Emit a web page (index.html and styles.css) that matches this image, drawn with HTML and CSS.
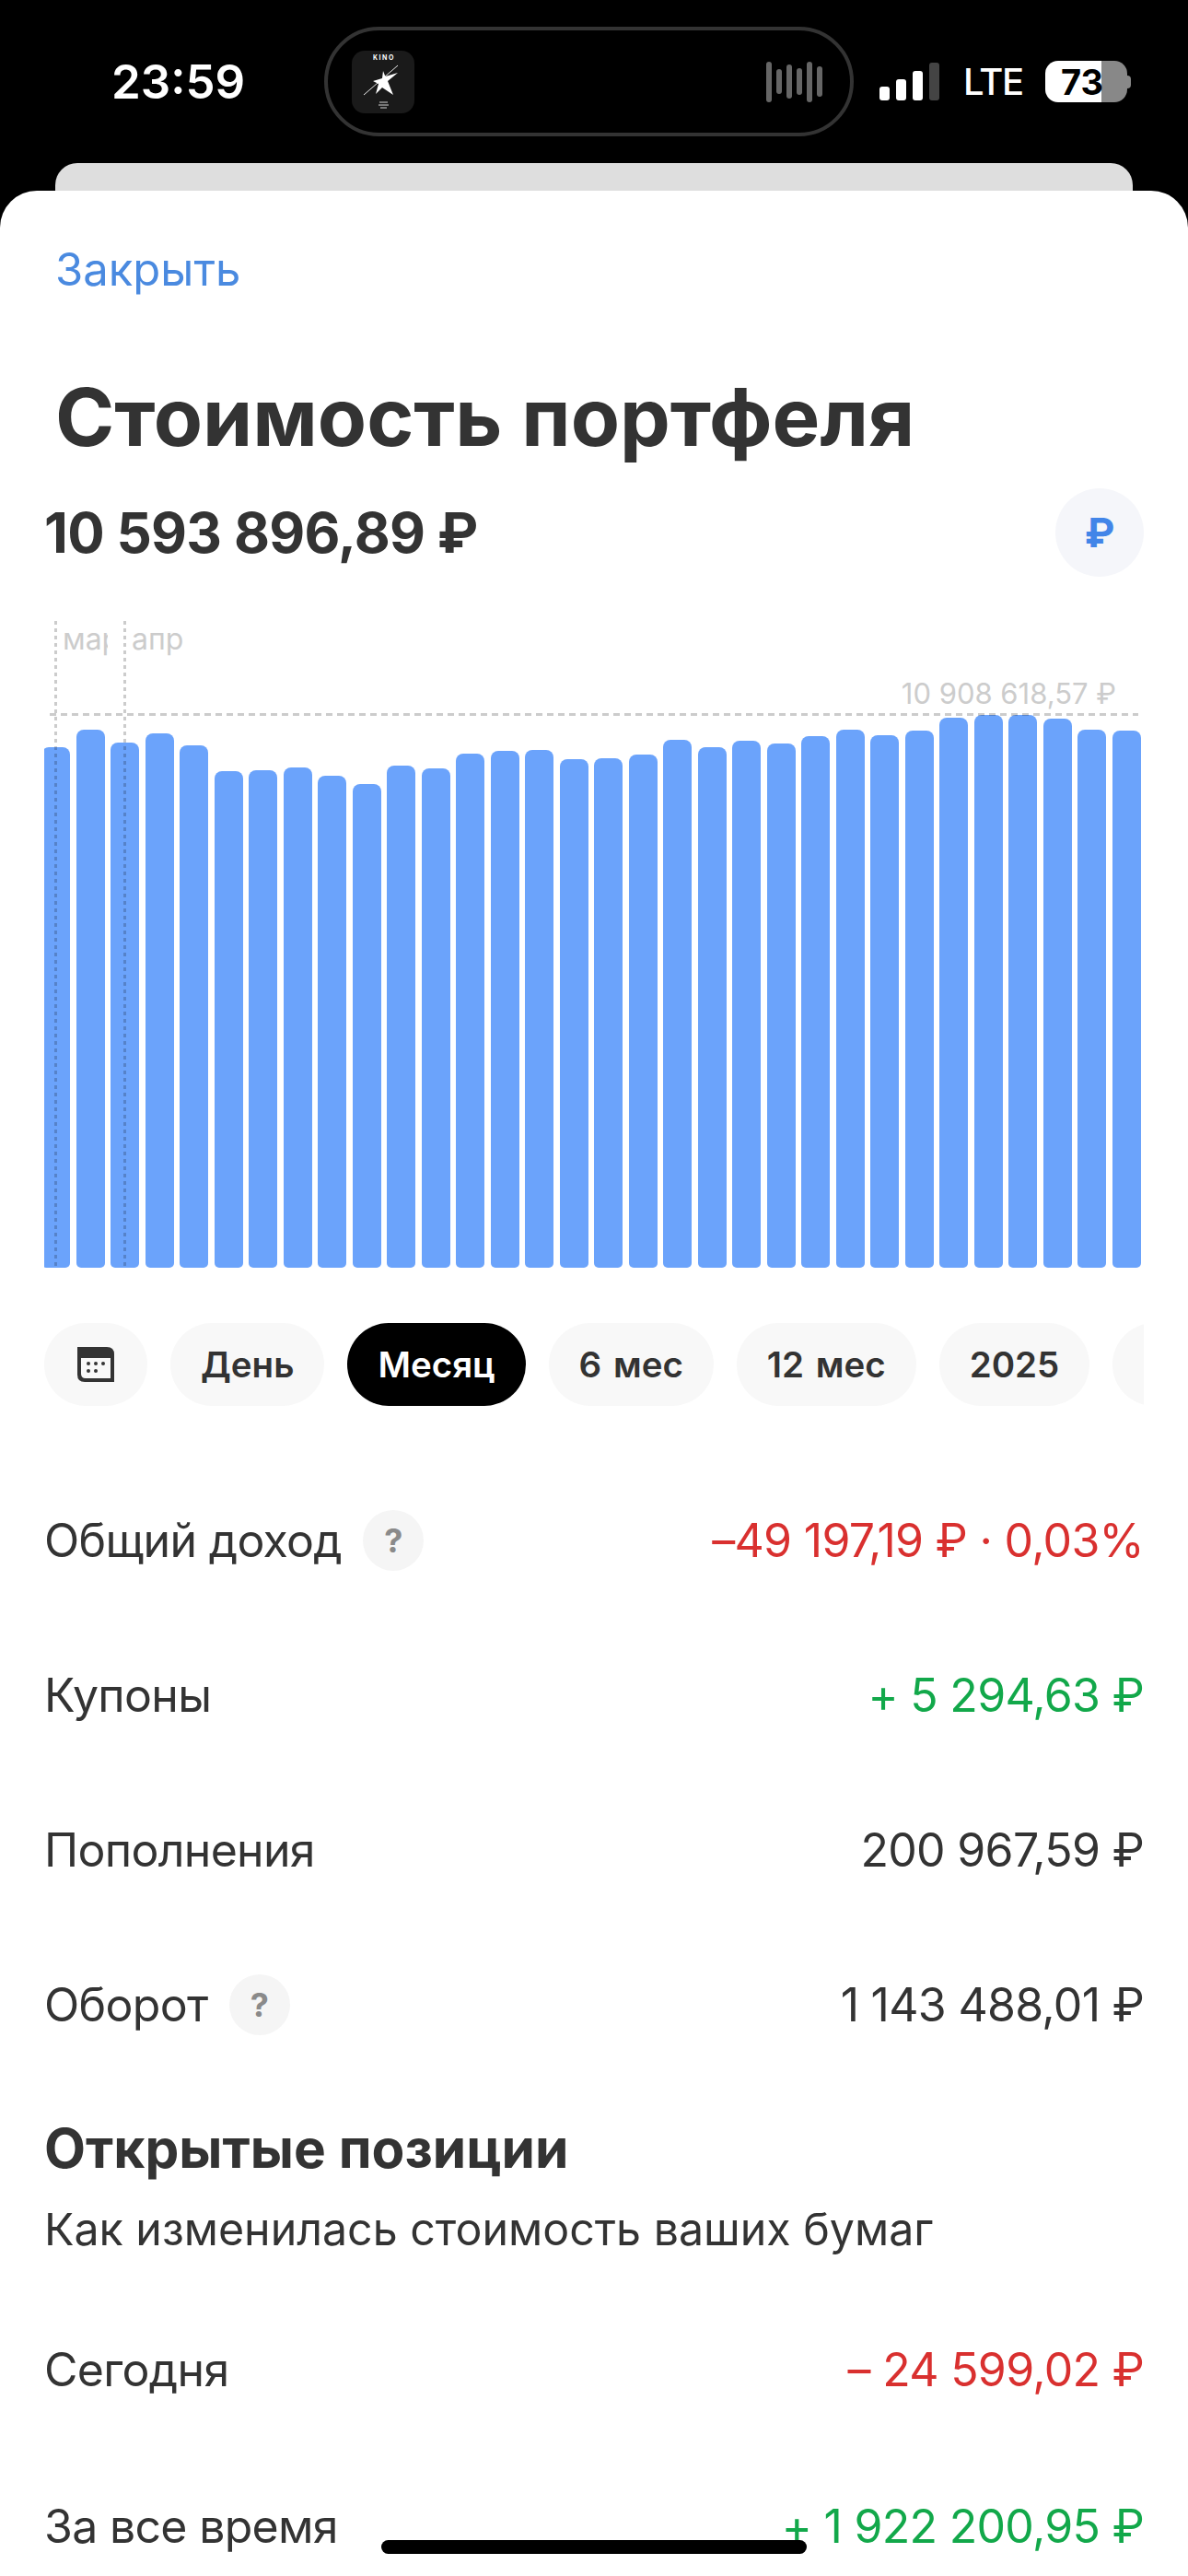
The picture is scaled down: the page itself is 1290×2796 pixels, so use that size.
FILE: index.html
```html
<!DOCTYPE html>
<html>
<head>
    <title>Стоимость портфеля</title>
    <link rel="stylesheet" href="styles.css">
</head>
<body>
    <div class="status">
        <div class="time">23:59</div>
        <div class="island">
            <svg class="album" width="68" height="68" viewBox="0 0 68 68">
                <rect width="68" height="68" rx="14" fill="#1a1a1a"/>
                <text x="35" y="10" class="album-title">KINO</text>
                <line x1="13" y1="48" x2="50" y2="16" stroke="#e8e8e8" stroke-width="1"/>
                <polygon points="34,22 36.4,28 50,24 39,33 45,48 33,40 26,47 29,36 23,33 33,30" fill="#fff"/>
                <path d="M30 55h9v2h-9zM29 58h11v2h-11zM31 61h7v2h-7z" fill="#777"/>
            </svg>
            <div class="wave">
                <span class="w1"></span><span class="w2"></span><span class="w3"></span><span class="w4"></span><span class="w1"></span><span class="w5"></span>
            </div>
        </div>
        <div class="signal">
            <span class="s1"></span><span class="s2"></span><span class="s3"></span><span class="s4"></span>
        </div>
        <div class="lte">LTE</div>
        <div class="battery"><span class="battery-num">73</span></div>
        <div class="battery-nub"></div>
    </div>
    <div class="back-sheet"></div>
    <div class="sheet">
        <div class="close">Закрыть</div>
        <h1 class="title">Стоимость портфеля</h1>
        <div class="total">
            <div class="total-sum">10 593 896,89 ₽</div>
            <div class="currency">₽</div>
        </div>
        <div class="chart">
            <div class="bars" id="bars"></div>
            <div class="vline vline-mar"></div>
            <div class="vline vline-apr"></div>
            <div class="hline"></div>
            <div class="month month-mar">мар</div>
            <div class="month month-apr">апр</div>
            <div class="max">10 908 618,57 ₽</div>
        </div>
        <div class="pills">
            <div class="pill pill-cal">
                <svg width="40" height="38" viewBox="0 0 40 38">
                    <path d="M0 0H32Q40 0 40 8V38H8Q0 38 0 30Z" fill="#333"/>
                    <path d="M4 12H36V34H9Q4 34 4 29Z" fill="#f8f8f8"/>
                    <circle cx="12" cy="18" r="2" fill="#333"/><circle cx="20" cy="18" r="2" fill="#333"/><circle cx="28" cy="18" r="2" fill="#333"/>
                    <circle cx="12" cy="26" r="2" fill="#333"/><circle cx="20" cy="26" r="2" fill="#333"/>
                </svg>
            </div>
            <div class="pill">День</div>
            <div class="pill pill-active">Месяц</div>
            <div class="pill pill-months">6 мес</div>
            <div class="pill pill-months">12 мес</div>
            <div class="pill">2025</div>
            <div class="pill pill-more"></div>
        </div>
        <div class="rows">
            <div class="row">
                <div class="row-label">Общий доход <span class="help">?</span></div>
                <div class="red">–49 197,19 ₽ · 0,03%</div>
            </div>
            <div class="row">
                <div class="row-label">Купоны</div>
                <div class="green">+ 5 294,63 ₽</div>
            </div>
            <div class="row">
                <div class="row-label">Пополнения</div>
                <div>200 967,59 ₽</div>
            </div>
            <div class="row">
                <div class="row-label">Оборот <span class="help">?</span></div>
                <div>1 143 488,01 ₽</div>
            </div>
        </div>
        <h2 class="section">Открытые позиции</h2>
        <div class="section-sub">Как изменилась стоимость ваших бумаг</div>
        <div class="rows rows-open">
            <div class="row">
                <div class="row-label">Сегодня</div>
                <div class="red">– 24 599,02 ₽</div>
            </div>
            <div class="row">
                <div class="row-label">За все время</div>
                <div class="green">+ 1 922 200,95 ₽</div>
            </div>
        </div>
    </div>
    <div class="home-bar"></div>
    <script>
        const tops = [812, 793, 807, 797, 810, 838, 837, 834, 843, 852, 832, 835, 819, 816, 815, 825,
            824, 820, 804, 812, 805, 808, 800, 793, 799, 794, 780, 777, 777, 781, 793, 794];
        const bars = document.getElementById("bars");
        for (const top of tops) {
            const bar = document.createElement("div");
            bar.className = "bar";
            bar.style.height = (1377 - top) + "px";
            bars.appendChild(bar);
        }
    </script>
</body>
</html>
```

FILE: styles.css
```css
* {
    box-sizing: border-box;
}

body {
    margin: 0;
    width: 1290px;
    height: 2796px;
    overflow: hidden;
    background: #000;
    font-family: Inter, "Noto Sans", sans-serif;
    color: #333;
}

.status {
    display: flex;
    align-items: center;
    height: 177px;
    color: #fff;
}

.time {
    width: 144px;
    margin-left: 121px;
    font-size: 51px;
    font-weight: 600;
    white-space: nowrap;
}

.island {
    display: flex;
    align-items: center;
    justify-content: space-between;
    width: 575px;
    height: 119px;
    margin-left: 87px;
    padding: 0 30px 0 26px;
    border: 4px solid #333;
    border-radius: 60px;
}

.album-title {
    font-size: 7px;
    font-weight: 700;
    letter-spacing: 1.6px;
    text-anchor: middle;
    fill: #fff;
}

.wave {
    display: flex;
    align-items: center;
    gap: 5px;
}

.wave span {
    width: 6px;
    border-radius: 3px;
    background: #666;
}

.w1 { height: 44px; }
.w2 { height: 27px; }
.w3 { height: 37px; }
.w4 { height: 29px; }
.w5 { height: 33px; }

.signal {
    display: flex;
    align-items: flex-end;
    gap: 7px;
    height: 41px;
    margin-left: 28px;
}

.signal span {
    width: 11px;
    border-radius: 3px;
    background: #fff;
}

.s1 { height: 15px; }
.s2 { height: 23px; }
.s3 { height: 32px; }
.signal .s4 { height: 41px; background: #444; }

.lte {
    width: 62px;
    margin-left: 26px;
    font-size: 40px;
    font-weight: 500;
    letter-spacing: -1.5px;
}

.battery {
    display: flex;
    align-items: center;
    width: 89px;
    height: 45px;
    margin-left: 27px;
    padding-left: 17px;
    border-radius: 14px;
    background: linear-gradient(90deg, #fff 69%, #888 69%);
}

.battery-num {
    color: #000;
    font-size: 38px;
    font-weight: 700;
}

.battery-nub {
    width: 4px;
    height: 14px;
    border-radius: 0 4px 4px 0;
    background: #888;
}

.back-sheet {
    height: 30px;
    margin: 0 60px;
    border-radius: 24px 24px 0 0;
    background: #dedede;
}

.sheet {
    height: 2589px;
    padding: 57px 48px 0;
    border-radius: 40px 40px 0 0;
    background: #fff;
}

.close {
    margin-left: 12px;
    color: #4a8ae0;
    font-size: 49px;
    line-height: 58px;
}

.title {
    margin: 81px 0 0 12px;
    font-size: 87px;
    font-weight: 700;
    line-height: 100px;
}

.total {
    display: flex;
    align-items: center;
    justify-content: space-between;
    margin-top: 27px;
}

.total-sum {
    font-size: 60px;
    font-weight: 700;
    letter-spacing: -0.7px;
}

.currency {
    display: flex;
    align-items: center;
    justify-content: center;
    width: 96px;
    height: 96px;
    border-radius: 50%;
    background: #f5f6fa;
    color: #4285e8;
    font-size: 44px;
    font-weight: 700;
}

.chart {
    position: relative;
    height: 702px;
    margin-top: 48px;
    overflow: hidden;
}

.bars {
    display: flex;
    align-items: flex-end;
    gap: 6.71px;
    height: 100%;
    margin-left: -2.8px;
}

.bar {
    flex: none;
    width: 30.8px;
    border-radius: 8px 8px 5px 5px;
    background: #6ba3fb;
}

.vline {
    position: absolute;
    top: 0;
    bottom: 0;
    width: 3px;
    background: repeating-linear-gradient(180deg, rgba(0, 0, 0, 0.2) 0 4.5px, transparent 4.5px 8px);
}

.vline-mar { left: 11px; }
.vline-apr { left: 86px; }

.hline {
    position: absolute;
    top: 100px;
    left: 6px;
    width: 1182px;
    height: 3px;
    background: repeating-linear-gradient(90deg, rgba(0, 0, 0, 0.2) 0 7px, transparent 7px 12px);
}

.month {
    position: absolute;
    top: 0;
    overflow: hidden;
    color: #ccc;
    font-size: 32px;
    line-height: 40px;
    white-space: nowrap;
}

.month-mar { left: 20px; width: 49px; }
.month-apr { left: 95px; }

.max {
    position: absolute;
    top: 62px;
    right: 30px;
    color: #ccc;
    font-size: 31px;
    line-height: 34px;
}

.pills {
    display: flex;
    gap: 25px;
    margin-top: 60px;
    overflow: hidden;
}

.pill {
    display: flex;
    flex: none;
    align-items: center;
    height: 90px;
    padding: 0 33px;
    border-radius: 45px;
    background: #f8f8f8;
    font-size: 38.5px;
    font-weight: 600;
}

.pill-cal {
    padding: 0 36px;
}

.pill-active {
    background: #000;
    color: #fff;
}

.pill-months {
    word-spacing: 3px;
}

.pill-more {
    width: 90px;
}

.rows {
    margin-top: 62px;
}

.row {
    display: flex;
    align-items: center;
    justify-content: space-between;
    height: 168px;
    font-size: 50px;
    letter-spacing: -0.7px;
}

.row-label {
    display: flex;
    align-items: center;
    gap: 23px;
}

.help {
    display: flex;
    align-items: center;
    justify-content: center;
    width: 66px;
    height: 66px;
    border-radius: 50%;
    background: #f5f5f5;
    color: #8a8a8a;
    font-size: 36px;
    font-weight: 700;
}

.red {
    color: #d9302f;
}

.green {
    color: #12a84a;
}

.section {
    margin: 37px 0 0;
    font-size: 58.5px;
    font-weight: 700;
    line-height: 70px;
}

.section-sub {
    margin-top: 25px;
    font-size: 48.3px;
    line-height: 56px;
}

.rows-open {
    margin-top: 39px;
}

.rows-open .row {
    height: 170px;
}

.home-bar {
    position: absolute;
    top: 2757px;
    left: 414px;
    width: 462px;
    height: 15px;
    border-radius: 8px;
    background: #000;
}
```
